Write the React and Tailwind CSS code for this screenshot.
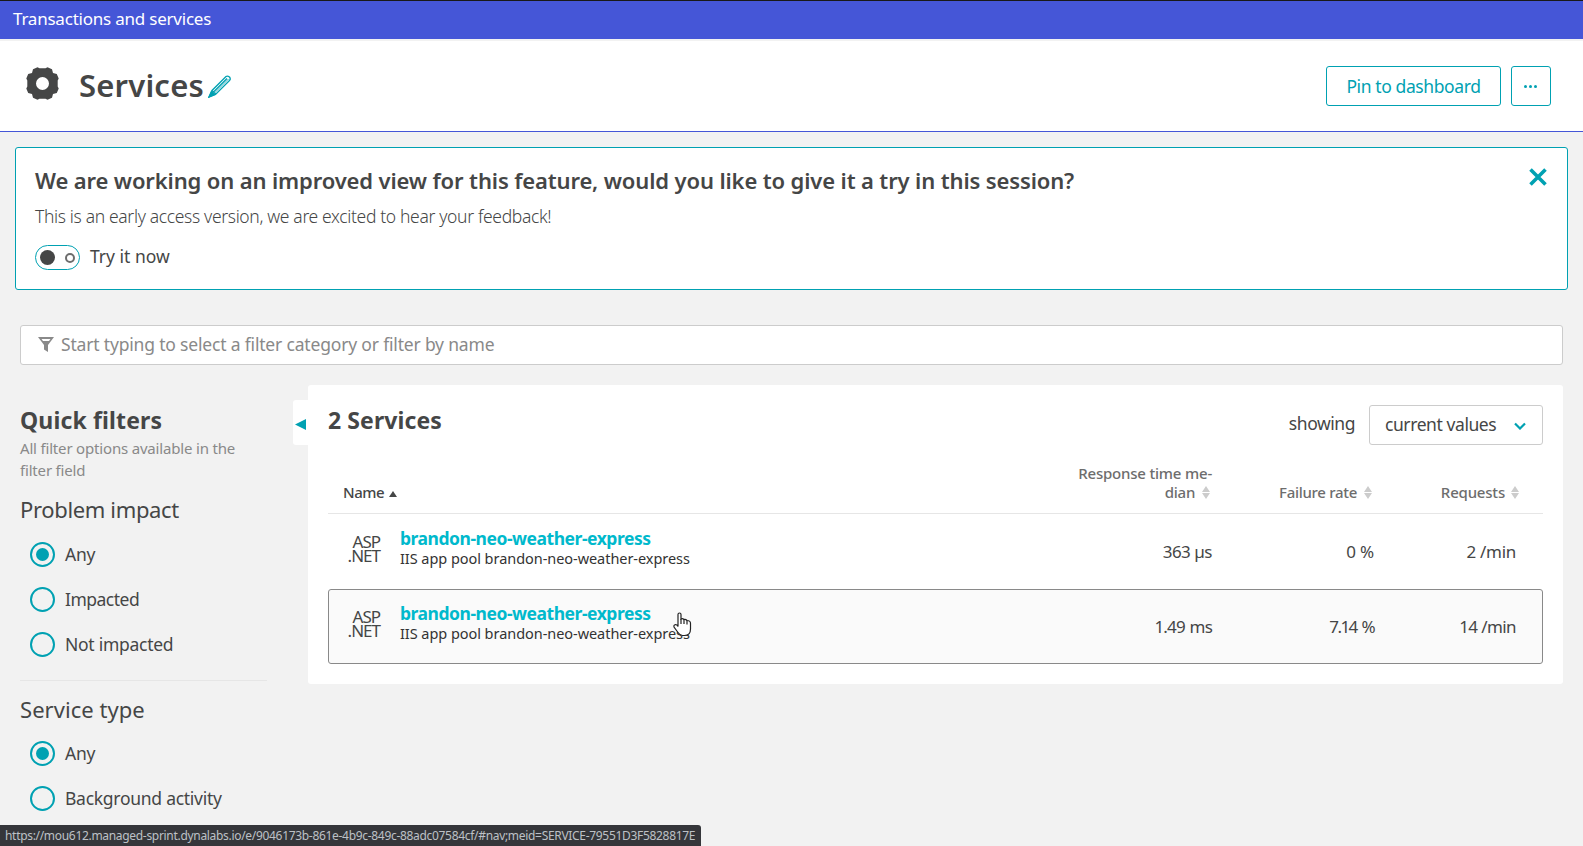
const T = ({ c = "", children }) => <span className={"block whitespace-nowrap " + c}>{children}</span>;

const Radio = ({ label, on, sp = "tracking-[-0.27px]", mb = "mb-[20px]" }) => (
  <label className={"ml-2.5 flex h-[25px] items-center gap-[10px] " + mb}>
    <span className="flex size-[25px] items-center justify-center rounded-full border-2 border-[#00a1b2]">
      {on && <span className="size-[13px] rounded-full bg-[#00a1b2]" />}
    </span>
    <T c={"-mt-[2px] text-[17.5px] leading-6 " + sp}>{label}</T>
  </label>
);

const Sort = () => (
  <svg className="h-[13px] w-2 shrink-0" viewBox="0 0 8 13">
    <path d="M4 0L8 6H0ZM4 13L8 7H0Z" fill="#ccc" />
  </svg>
);

const Row = ({ time, rate, req, timeSp, rateSp, reqSp, active }) => (
  <div className={"flex h-[75px] rounded-[3px] border " + (active ? "border-[#898989] bg-[#fafafa]" : "border-transparent")}>
    <div className="mt-[20px] ml-[18px] w-[33px] text-right text-[17px] leading-[14px] tracking-[-1px]">
      <T>ASP</T>
      <T>.NET</T>
    </div>
    <div className="mt-[13px] ml-[20px] flex-1">
      <T c="text-[17.5px] leading-5 font-bold text-[#00b9cc] tracking-[-0.47px]">brandon-neo-weather-express</T>
      <T c="text-[14.5px] leading-5 text-[#333] tracking-[-0.05px]">IIS app pool brandon-neo-weather-express</T>
    </div>
    <div className="mt-[25px] flex text-right text-[17px] leading-6">
      <T c={"w-[120px] " + timeSp}>{time}</T>
      <T c={"w-[162px] " + rateSp}>{rate}</T>
      <T c={"w-[142px] " + reqSp}>{req}</T>
    </div>
    <div className="w-[26px]" />
  </div>
);

export default function App() {
  return (
    <div className="relative flex h-[846px] w-[1583px] flex-col overflow-hidden bg-[#f2f2f2] font-['Noto_Sans',sans-serif] text-[#454646]">
      <div className="h-[39px] shrink-0 border-t border-[#191919] bg-[#4556d7] pt-[6px] pl-[13px] text-white">
        <T c="text-[17px] leading-6 tracking-[-0.22px]">Transactions and services</T>
      </div>
      <header className="mt-[2px] flex h-[91px] shrink-0 items-start border-b border-[#4556d7] bg-white pl-[26px]">
        <svg className="mt-[26px] size-[33px]" viewBox="0 0 33 33">
          <path fillRule="evenodd" fill="#454646" d="M11.500 .3L13.500 1.300H19.500L21.500 .3L26 2.200L27 6L30.800 7L32.700 11.500L31.700 13.500V19.500L32.700 21.500L30.800 26L27 27L26 30.800L21.500 32.700L19.500 31.700H13.500L11.500 32.700L7 30.800L6 27L2.200 26L.3 21.500L1.300 19.500V13.500L.3 11.500L2.200 7L6 6L7 2.200ZM16.500 10A6.500 6.500 0 1 0 16.500 23A6.500 6.500 0 1 0 16.500 10Z" />
        </svg>
        <h1 className="mt-[22px] ml-[20px] w-[124px] text-[31px] leading-[44px] font-semibold tracking-[0.2px]"><T>Services</T></h1>
        <svg className="mt-[34px] ml-[5px] size-[23px]" viewBox="0 0 23 23" fill="none" stroke="#00a1b2" strokeWidth="1.3">
          <path d="M1 22L4 15.500L18 1.500Q19.500 .5 21.500 2Q23 4 21.500 5.500L7.500 19.500ZM5.500 17L19 3.500M4 15.500L7.500 19" />
          <path d="M6.500 18L20.500 4" strokeWidth=".8" />
          <path d="M1 22L3.500 16.500L6.500 19.500Z" fill="#00a1b2" />
        </svg>
        <div className="mt-[25px] mr-[32px] ml-auto flex gap-[10px] text-[#00a1b2]">
          <button className="flex h-10 w-[175px] items-center justify-center rounded-[3px] border border-[#00a1b2]"><T c="text-[17.5px] tracking-[-0.4px]">Pin to dashboard</T></button>
          <button className="flex size-10 items-center justify-center gap-[2px] rounded-[3px] border border-[#00a1b2] pr-px">
            <i className="size-[3px] rounded-full bg-[#00a1b2]" /><i className="size-[3px] rounded-full bg-[#00a1b2]" /><i className="size-[3px] rounded-full bg-[#00a1b2]" />
          </button>
        </div>
      </header>

      <section className="mt-[15px] ml-[15px] flex h-[143px] w-[1553px] shrink-0 justify-between rounded-[3px] border border-[#00a1b2] bg-white pr-[20px] pl-[19px]">
        <div>
          <T c="mt-[17px] text-[22px] leading-[30px] font-semibold tracking-[-0.13px]">We are working on an improved view for this feature, would you like to give it a try in this session?</T>
          <T c="mt-[9px] text-[17.5px] leading-6 font-light tracking-[-0.34px]">This is an early access version, we are excited to hear your feedback!</T>
          <div className="mt-[17px] flex h-[25px] items-center gap-[10px]">
            <span className="flex h-[25px] w-[45px] items-center justify-between rounded-full border border-[#00a1b2] pr-[4px] pl-1">
              <i className="size-[15px] rounded-full bg-[#454646]" />
              <i className="size-[10px] rounded-full border-2 border-[#6d6d6d]" />
            </span>
            <T c="-mt-[3px] text-[17.5px] leading-6">Try it now</T>
          </div>
        </div>
        <svg className="mt-[20px] size-[18px]" viewBox="0 0 18 18"><path d="M1.500 1.500L16.500 16.500M16.500 1.500L1.500 16.500" stroke="#00a1b2" strokeWidth="3.600" /></svg>
      </section>

      <div className="mt-[35px] ml-5 flex h-10 w-[1543px] shrink-0 items-center rounded-[3px] border border-[#ccc] bg-white pl-[17px] text-[#898989]">
        <svg className="mr-[7px] mb-px h-[15px] w-4" viewBox="0 0 16 15"><path fillRule="evenodd" fill="#898989" d="M0 0H16L10 8V15L6 12.500V8ZM3.500 2L5 4H11L12.500 2Z" /></svg>
        <T c="-mt-px text-[17.5px] tracking-[-0.18px]">Start typing to select a filter category or filter by name</T>
      </div>

      <div className="mt-5 ml-5 flex items-start">
        <aside className="w-[248px] pt-[20px]">
          <T c="text-[23px] leading-[30px] font-bold tracking-[0.15px]">Quick filters</T>
          <div className="mt-[2px] text-[15px] leading-[22px] tracking-[-0.18px] text-[#898989]">
            <T>All filter options available in the</T>
            <T>filter field</T>
          </div>
          <T c="mt-[13px] mb-[18px] text-[22px] leading-[30px] tracking-[-0.35px]">Problem impact</T>
          <Radio label="Any" on />
          <Radio label="Impacted" sp="tracking-[-0.5px]" />
          <Radio label="Not impacted" mb="mb-[23px]" />
          <div className="mr-[1px] border-t border-[#e6e6e6] pt-[14px]" />
          <T c="-mt-px mb-[17px] text-[22px] leading-[30px] tracking-[0.05px]">Service type</T>
          <Radio label="Any" on />
          <Radio label="Background activity" />
        </aside>
        <div className="mt-[15px] ml-[25px] flex h-[45px] w-[15px] items-center rounded-l-[3px] bg-white pt-[3px] pl-[2px]">
          <svg className="h-[11px] w-[11px]" viewBox="0 0 11 11"><path d="M0 5.500L11 0V11Z" fill="#00a1b2" /></svg>
        </div>
        <main className="h-[299px] w-[1255px] rounded-[3px] bg-white px-5 pt-5">
          <div className="flex h-10">
            <T c="text-[23px] leading-[30px] font-bold tracking-[0.1px]">2 Services</T>
            <T c="mt-[6px] mr-[14px] ml-auto text-[17.5px] leading-6 tracking-[-0.45px]">showing</T>
            <div className="flex h-10 w-[174px] items-center justify-between rounded-[3px] border border-[#ccc] pr-[16px] pl-[15px]">
              <T c="-mt-px text-[17.5px] tracking-[-0.42px]">current values</T>
              <svg className="mt-px h-2 w-3" viewBox="0 0 12 8"><path d="M1 1.500L6 6.500L11 1.500" stroke="#00a1b2" strokeWidth="2.200" fill="none" /></svg>
            </div>
          </div>
          <div className="flex h-[69px] items-end border-b border-[#e6e6e6] pb-[11px] pl-[15px] text-[15px] leading-[19px] font-medium">
            <T c="mr-[5px] tracking-[-0.5px]">Name</T>
            <svg className="mr-auto mb-[5px] h-[6px] w-2" viewBox="0 0 8 6"><path d="M4 0L8 6H0Z" fill="#454646" /></svg>
            <div className="w-[135px] text-right text-[#6d6d6d]">
              <T c="pr-px tracking-[-0.2px]">Response time me-</T>
              <div className="flex items-center justify-end gap-[7px] pr-[3px]"><T c="tracking-[-0.3px]">dian</T><Sort /></div>
            </div>
            <div className="flex w-[159px] items-center justify-end gap-[7px] text-[#6d6d6d]"><T c="tracking-[-0.3px]">Failure rate</T><Sort /></div>
            <div className="mr-[24px] flex w-[147px] items-center justify-end gap-[6px] text-[#6d6d6d]"><T c="tracking-[-0.2px]">Requests</T><Sort /></div>
          </div>
          <Row time="363 µs" rate="0 %" req="2 /min" timeSp="tracking-[-0.5px]" rateSp="tracking-[-0.2px]" reqSp="tracking-[-0.3px]" />
          <Row time="1.49 ms" rate="7.14 %" req="14 /min" timeSp="tracking-[-0.8px] [word-spacing:1px]" rateSp="tracking-[-1.6px] [word-spacing:2px]" reqSp="tracking-[-0.6px]" active />
        </main>
      </div>

      <svg className="absolute top-[612px] left-[673px] h-[25px] w-[19px]" viewBox="0 0 19 25">
        <path d="M5 2.500Q5 1 6.500 1T8 2.500V7Q9.500 6 11 7.500Q12.500 6.800 14 8.500Q17.500 8.500 17.500 11.500V17Q17.500 23.500 11.500 23.500H9.500Q7 23.500 5 20.500L1 15Q.5 13 2.500 12.500Q4 12.500 5 14.500Z" fill="#fff" stroke="#222" strokeWidth="1.200" />
        <path d="M8 7V12M11 7.500V12M14 8.500V12.500" stroke="#222" strokeWidth="1.200" />
      </svg>
      <div className="absolute bottom-0 left-0 h-[21px] w-[701px] rounded-tr-[3px] bg-[#35363a] pt-px pl-[5px] text-[#bdc1c6]">
        <T c="text-[12px] leading-5 tracking-[-0.31px]">https://mou612.managed-sprint.dynalabs.io/e/9046173b-861e-4b9c-849c-88adc07584cf/#nav;meid=SERVICE-79551D3F5828817E</T>
      </div>
    </div>
  );
}
